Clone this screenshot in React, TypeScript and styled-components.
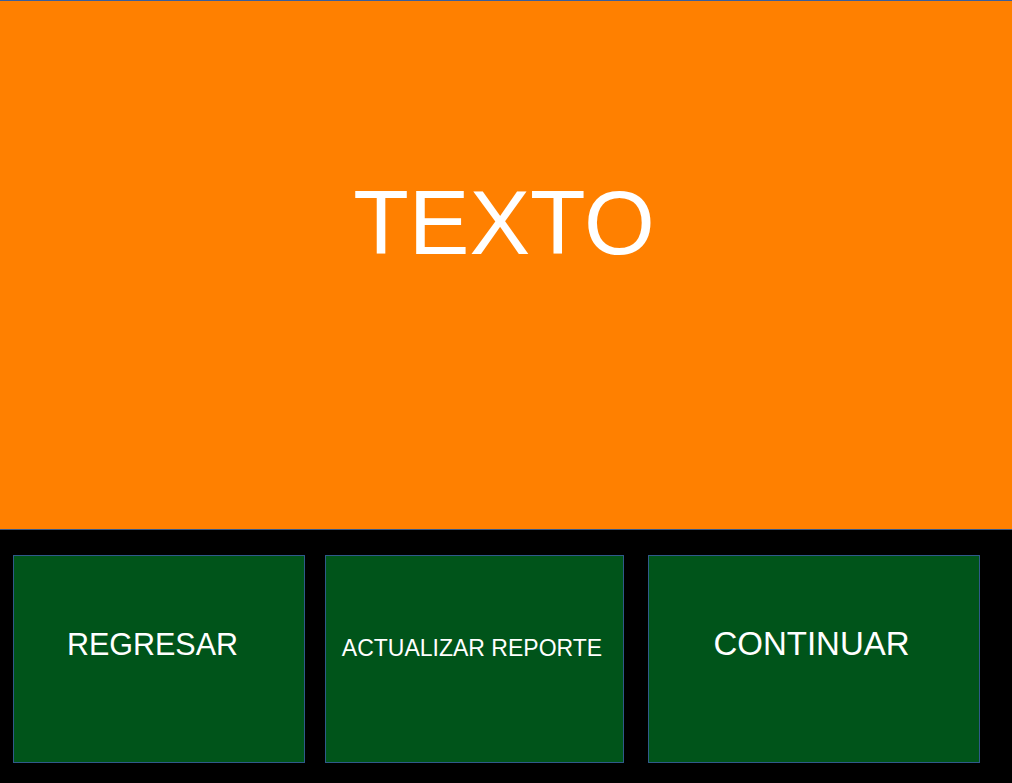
import * as React from 'react';
import styled, { createGlobalStyle } from 'styled-components';

const GlobalStyle = createGlobalStyle`
  html, body {
    margin: 0;
    padding: 0;
    background: #000000;
  }
  body {
    font-family: "Liberation Sans", Arial, sans-serif;
    width: 1012px;
    height: 783px;
    overflow: hidden;
  }
`;

const Screen = styled.div`
  display: flex;
  flex-direction: column;
  width: 1012px;
  height: 783px;
  background: #000000;
`;

const Banner = styled.div`
  box-sizing: border-box;
  height: 530px;
  background: #ff8000;
  border-top: 1px solid #3a5f9c;
  border-bottom: 1px solid #3c5a85;
  display: flex;
  align-items: center;
  justify-content: center;
  padding: 0 4px 84px 0;
`;

const BannerText = styled.span`
  color: #ffffff;
  font-size: 91px;
  line-height: normal;
`;

const ActionRow = styled.div`
  display: flex;
  gap: 20px;
  padding: 25px 0 0 13px;
`;

const ActionButton = styled.button<{ $width: number; $size: number; $lift: number; $shift: number; $extra?: number }>`
  box-sizing: border-box;
  width: ${(p) => p.$width}px;
  height: 208px;
  margin: 0 0 0 ${(p) => p.$extra || 0}px;
  background: #00541a;
  border: 1px solid #2f5a8a;
  color: #ffffff;
  font-family: "Liberation Sans", Arial, sans-serif;
  font-size: ${(p) => p.$size}px;
  line-height: normal;
  display: flex;
  align-items: center;
  justify-content: center;
  padding: 0 ${(p) => p.$shift}px ${(p) => p.$lift}px 0;
  cursor: pointer;
`;

const buttons = [
  { label: 'REGRESAR', width: 292, size: 30.5, lift: 29, shift: 13 },
  { label: 'ACTUALIZAR REPORTE', width: 299, size: 23, lift: 21, shift: 5 },
  { label: 'CONTINUAR', width: 332, size: 33, lift: 30, shift: 5, extra: 4 },
];

const App: React.FC = () => {
  return (
    <>
      <GlobalStyle />
      <Screen>
        <Banner>
          <BannerText>TEXTO</BannerText>
        </Banner>
        <ActionRow>
          {buttons.map((b) => (
            <ActionButton
              key={b.label}
              $width={b.width}
              $size={b.size}
              $lift={b.lift}
              $shift={b.shift}
              $extra={b.extra}
            >
              {b.label}
            </ActionButton>
          ))}
        </ActionRow>
      </Screen>
    </>
  );
};

export default App;
